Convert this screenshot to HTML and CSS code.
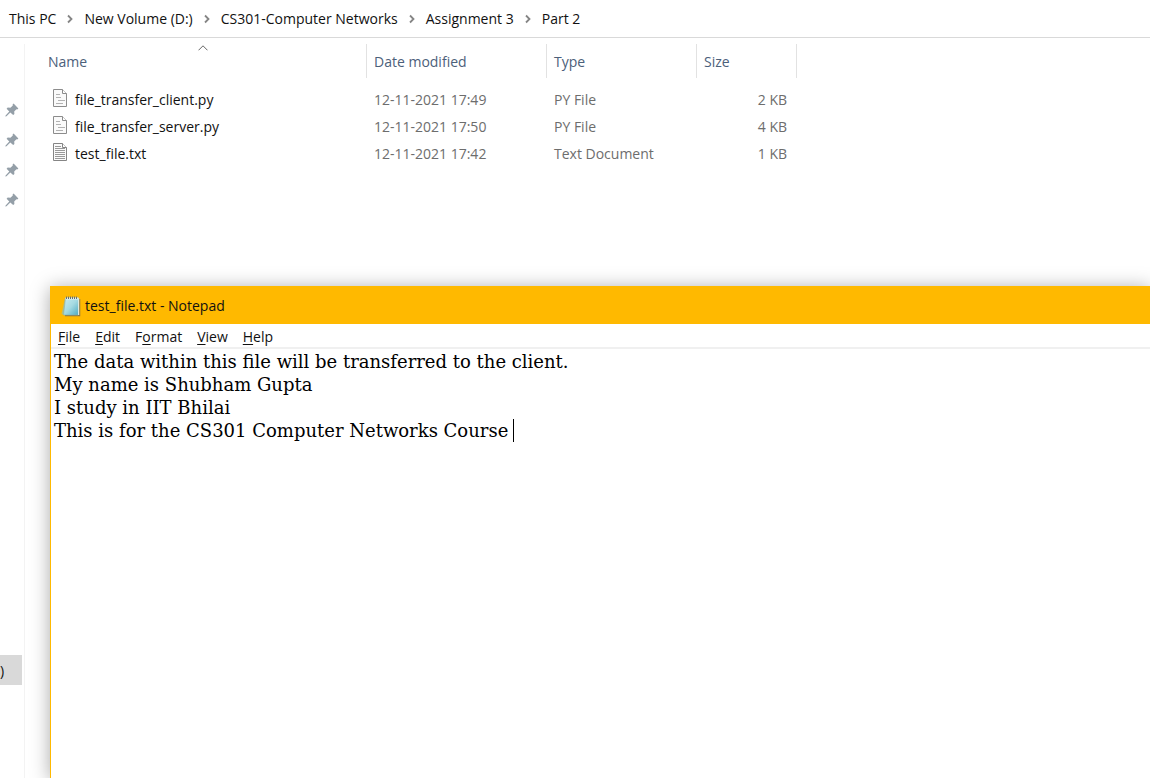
FILE: index.html
```html
<!DOCTYPE html>
<html lang="en">
<head>
<meta charset="utf-8">
<title>Part 2</title>
<link rel="stylesheet" href="styles.css">
</head>
<body>
<svg class="defs" aria-hidden="true">
  <symbol id="chevron" viewBox="0 0 6 10"><path d="M1 1.5 4.500 5 1 8.500" fill="none" stroke="#858585" stroke-width="1.8"/></symbol>
  <symbol id="pin" viewBox="0 0 14 14"><path d="M8.600.6 13.400 5.400 12.200 6.400 11.400 6.200 9.200 8.400 9.400 11 8.200 12 5.300 9.400 1.500 13.200.3 13.600.6 12.400 4.300 8.400 1.600 5.800 2.700 4.600 5.400 4.800 7.800 2.600 7.600 1.600Z" fill="#949fa8"/></symbol>
  <symbol id="py" viewBox="0 0 16 18"><path d="M1.500.5h9l4 4v13h-13Z" fill="#fafafa" stroke="#8c8c8c"/><path d="M10.500.5v4h4" fill="#fff" stroke="#8c8c8c"/><path d="M4 5.500h4M4 8.500h5M6 11.500h7M4 14.500h7" stroke="#b2b2b2"/></symbol>
  <symbol id="txt" viewBox="0 0 16 18"><path d="M1.500.5h9l4 4v13h-13Z" fill="#fafafa" stroke="#858585"/><path d="M10.500.5v4h4" fill="#fff" stroke="#858585"/><path d="M3 3.500h6M3 5.500h10M3 7.500h10M3 9.500h10M3 11.500h10M3 13.500h10M3 15.500h10" stroke="#999"/></symbol>
</svg>
<nav class="breadcrumbs" aria-label="Path">
  <a href="#">This PC</a><svg class="chevron"><use href="#chevron"/></svg>
  <a href="#">New Volume (D:)</a><svg class="chevron"><use href="#chevron"/></svg>
  <a href="#">CS301-Computer Networks</a><svg class="chevron"><use href="#chevron"/></svg>
  <a href="#">Assignment 3</a><svg class="chevron"><use href="#chevron"/></svg>
  <a href="#">Part 2</a>
</nav>
<div class="explorer">
  <aside class="sidebar">
    <div class="pins">
      <button class="pin" aria-label="Pinned folder 1"><svg><use href="#pin"/></svg></button>
      <button class="pin" aria-label="Pinned folder 2"><svg><use href="#pin"/></svg></button>
      <button class="pin" aria-label="Pinned folder 3"><svg><use href="#pin"/></svg></button>
      <button class="pin" aria-label="Pinned folder 4"><svg><use href="#pin"/></svg></button>
    </div>
    <a class="drive" href="#">)</a>
  </aside>
  <main class="content">
    <table class="files">
      <colgroup><col class="col-name"><col class="col-date"><col class="col-type"><col class="col-size"></colgroup>
      <thead>
        <tr>
          <th>Name<svg class="sort" viewBox="0 0 10 6"><path d="M.5 5.300 5 .8 9.500 5.300" fill="none" stroke="#666"/></svg></th>
          <th>Date modified</th><th>Type</th><th>Size</th>
        </tr>
      </thead>
      <tbody>
        <tr><td><span class="file"><svg class="icon"><use href="#py"/></svg>file_transfer_client.py</span></td><td>12-11-2021 17:49</td><td>PY File</td><td>2 KB</td></tr>
        <tr><td><span class="file"><svg class="icon"><use href="#py"/></svg>file_transfer_server.py</span></td><td>12-11-2021 17:50</td><td>PY File</td><td>4 KB</td></tr>
        <tr><td><span class="file"><svg class="icon"><use href="#txt"/></svg>test_file.txt</span></td><td>12-11-2021 17:42</td><td>Text Document</td><td>1 KB</td></tr>
      </tbody>
    </table>
    <section class="notepad">
      <header class="titlebar">
        <svg class="app-icon" viewBox="0 0 20 21">
          <defs><linearGradient id="page" x1="0" y1="0" x2="1" y2="1"><stop offset="0" stop-color="#c9edf0"/><stop offset=".5" stop-color="#a5dae2"/><stop offset="1" stop-color="#4fabc2"/></linearGradient></defs>
          <path d="M4 2 .5 18l3 1.200 2-17Z" fill="#b8bd79"/>
          <path d="M4 19.600h14.500V3" fill="none" stroke="#8b7540" stroke-width="1.500"/>
          <path d="M4.500 2H17.500v17H2.500Z" fill="url(#page)" stroke="#8ab2ac" stroke-width=".6"/>
          <path d="M17.700 2.500v16.500" stroke="#eef6f2"/>
          <path d="M4.500 2.500h13" stroke="#e1eeee" stroke-width="2"/>
          <path d="M5.500.5v2.500M7.500.5v2.500M9.500.5v2.500M11.500.5v2.500M13.500.5v2.500M15.500.5v2.500" stroke="#68706e"/>
        </svg>
        <span>test_file.txt - Notepad</span>
      </header>
      <div class="menubar">
        <button><u>F</u>ile</button><button><u>E</u>dit</button><button>F<u>o</u>rmat</button><button><u>V</u>iew</button><button><u>H</u>elp</button>
      </div>
      <div class="editor">
        <textarea aria-label="Text editor" spellcheck="false">The data within this file will be transferred to the client.
My name is Shubham Gupta
I study in IIT Bhilai
This is for the CS301 Computer Networks Course</textarea>
        <span class="caret"></span>
      </div>
    </section>
  </main>
</div>
</body>
</html>
```
FILE: styles.css
```css
* { box-sizing: border-box; }
body {
  margin: 0;
  height: 100vh;
  display: flex;
  flex-direction: column;
  overflow: hidden;
  background: #fff;
  color: #111;
  font: 14px/20px "Open Sans", sans-serif;
}
a { color: inherit; text-decoration: none; }
button { border: 0; padding: 0; background: none; color: inherit; font: inherit; }
.defs { display: none; }

.breadcrumbs {
  display: flex;
  align-items: center;
  gap: 11px;
  height: 38px;
  flex: none;
  padding-left: 9px;
  border-bottom: 1px solid #d9d9d9;
}
.chevron { width: 6px; height: 10px; }

.explorer { flex: 1; display: flex; min-height: 0; padding-top: 6px; }
.sidebar {
  width: 25px;
  flex: none;
  display: flex;
  flex-direction: column;
  justify-content: space-between;
  padding: 51px 0 93px;
  border-right: 1px solid #f3f3f3;
}
.pins { display: flex; flex-direction: column; }
.pin { height: 30px; width: 24px; padding-left: 5px; display: flex; align-items: center; }
.pin svg { width: 14px; height: 14px; }
.drive { width: 22px; height: 30px; padding-top: 6px; background: #d9d9d9; }

.content { flex: 1; min-width: 0; display: flex; flex-direction: column; overflow: hidden; }
.files { width: 772px; table-layout: fixed; border-collapse: separate; border-spacing: 0; color: #6d6d6d; }
.col-name { width: 342px; }
.col-date { width: 180px; }
.col-type { width: 150px; }
.col-size { width: 100px; }
th {
  position: relative;
  height: 34px;
  padding: 2px 7px 0;
  border-right: 1px solid #e2e2e2;
  color: #4c607a;
  font-weight: 400;
  text-align: left;
}
th:first-child { padding-left: 23px; }
.sort { position: absolute; top: 1px; left: 173px; width: 10px; height: 6px; }
tbody::before { content: ""; display: block; height: 8px; }
td { height: 27px; padding: 0 7px; }
td:first-child { padding-left: 27px; color: #111; }
td:last-child { padding-right: 10px; text-align: right; }
.file { display: flex; align-items: flex-start; gap: 7px; line-height: 22px; }
.icon { width: 16px; height: 18px; }

.notepad {
  flex: 1;
  display: flex;
  flex-direction: column;
  margin: 119px 0 0 25px;
  border-left: 1px solid #ffb900;
  background: #fff;
  box-shadow: 0 2px 18px rgba(0, 0, 0, .34);
}
.titlebar {
  display: flex;
  align-items: center;
  gap: 4px;
  height: 38px;
  padding: 2px 0 0 10px;
  background: #ffb900;
}
.app-icon { width: 20px; height: 21px; }
.menubar { display: flex; gap: 15px; height: 25px; padding: 2px 0 0 7px; border-bottom: 2px solid #f0f0f0; }
.menubar u { text-underline-offset: 2px; }
.editor { position: relative; flex: 1; display: flex; }
textarea {
  flex: 1;
  padding: 1px 3px;
  border: 0;
  outline: 0;
  resize: none;
  background: #fff;
  color: #000;
  font: 18px/23px "DejaVu Serif", serif;
}
.caret { position: absolute; top: 70px; left: 462px; width: 1px; height: 23px; background: #000; }
```
